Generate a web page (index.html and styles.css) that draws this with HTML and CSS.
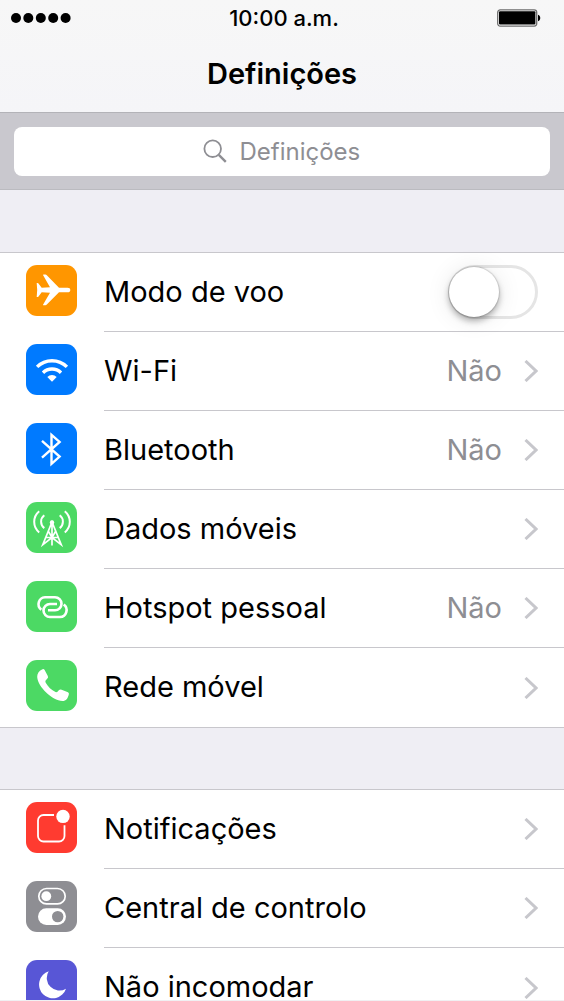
FILE: index.html
```html
<!DOCTYPE html>
<html lang="pt">
<head>
<meta charset="utf-8">
<meta name="viewport" content="width=device-width, initial-scale=1">
<title>Definições</title>
<link rel="stylesheet" href="styles.css">
</head>
<body>
<div class="screen">
  <header class="top">
    <div class="status">
      <svg class="signal" viewBox="0 0 60 10" width="60" height="10" aria-hidden="true"><circle cx="5" cy="5" r="5"/><circle cx="17.3" cy="5" r="5"/><circle cx="29.8" cy="5" r="5"/><circle cx="42.2" cy="5" r="5"/><circle cx="54.6" cy="5" r="5"/></svg>
      <span class="clock">10:00 a.m.</span>
      <svg class="battery" viewBox="0 0 44 18" width="44" height="18" aria-hidden="true"><rect x=".7" y=".9" width="39" height="16.2" rx="2.5" fill="#fff" stroke="#6d6d6d" stroke-width="1.3"/><rect x="2" y="2.2" width="36.4" height="13.2" rx="1" fill="#000"/><path d="M41 5.8c3 .6 3 5.8 0 6.4z"/></svg>
    </div>
    <h1 class="title">Definições</h1>
  </header>
  <div class="searchbar">
    <label class="search">
      <svg viewBox="0 0 24 24" width="24" height="24" fill="none" stroke="#8e8e93" aria-hidden="true"><circle cx="9.7" cy="9.7" r="8.3" stroke-width="1.8"/><path d="M15.8 15.8l7 7" stroke-width="2.4"/></svg>
      <input class="search-input" type="search" placeholder="Definições" aria-label="Definições">
    </label>
  </div>
  <main>
    <ul class="group">
      <li class="row">
        <span class="tile orange"><svg viewBox="0 0 51 51" fill="#fff"><path d="M17 10q0-.5.6-.5h1.8q.8 0 1.4.7L33 22.7h8.5q2.8 0 2.8 2.3t-2.8 2.3H33L20.8 39.6q-.6.7-1.4.7h-1.8q-.6 0-.6-.5L24 27.7l-8.3-.4-3.2 4.200q-.4.500-1 .500h-.8l.5-7-.5-7h.8q.6 0 1 .5l3.200 4.200 8.300-.4z"/></svg></span>
        <label class="line" for="airplane"><span class="name">Modo de voo</span>
          <input class="switch" id="airplane" type="checkbox" role="switch"></label>
      </li>
      <li><a class="row" href="#wifi">
        <span class="tile blue"><svg viewBox="0 0 51 51" fill="none" stroke="#fff" stroke-width="3.4"><path d="M11.1 22.9a21 21 0 0 1 29.8 0M17 28.7a12.8 12.8 0 0 1 18 0"/><path d="M26 37.7L21.3 33a6.7 6.7 0 0 1 9.4 0z" fill="#fff" stroke="none"/></svg></span>
        <span class="line"><span class="name">Wi-Fi</span><span class="value">Não</span><svg class="chevron" viewBox="0 0 14 22"><path d="M1.5 1L12 11 1.5 21"/></svg></span>
      </a></li>
      <li><a class="row" href="#bluetooth">
        <span class="tile blue"><svg viewBox="0 0 51 51" fill="none" stroke="#fff" stroke-width="2.4"><path d="M16 17.8L33.6 33.6l-8.1 7.2V11.8l8.1 7.1L16 34.7"/></svg></span>
        <span class="line"><span class="name">Bluetooth</span><span class="value">Não</span><svg class="chevron" viewBox="0 0 14 22"><path d="M1.5 1L12 11 1.5 21"/></svg></span>
      </a></li>
      <li><a class="row" href="#dados">
        <span class="tile green"><svg viewBox="0 0 51 51" fill="none" stroke="#fff" stroke-width="2"><path d="M13.2 9.2q-5 4.2-5 10.6t5 10.6M18.3 13.3q-3.2 2.5-3.2 6.4t3.2 6.4M38.8 9.2q5 4.2 5 10.6t-5 10.6M33.7 13.3q3.2 2.5 3.2 6.400t-3.200 6.400"/><path d="M26 20l-9.2 22.700L26 35.500l9.200 7.200zM26 20v23.500M19.800 35.500h12.400M22.500 29.500L26 35.500l3.500-6" stroke-width="1.7"/><circle cx="26" cy="20.500" r="2.200" fill="#fff" stroke="none"/></svg></span>
        <span class="line"><span class="name">Dados móveis</span><svg class="chevron" viewBox="0 0 14 22"><path d="M1.5 1L12 11 1.5 21"/></svg></span>
      </a></li>
      <li><a class="row" href="#hotspot">
        <span class="tile green"><svg viewBox="0 0 51 51" fill="none" stroke="#fff" stroke-width="2.6"><path d="M15.3 28.7A6.900 6.900 0 0 1 19 16.300h10a6.500 6.500 0 0 1 0 13h-7M37.700 23.500A6.900 6.900 0 0 1 34 36H24a6.500 6.500 0 0 1 0-13h7"/></svg></span>
        <span class="line"><span class="name">Hotspot pessoal</span><span class="value">Não</span><svg class="chevron" viewBox="0 0 14 22"><path d="M1.5 1L12 11 1.5 21"/></svg></span>
      </a></li>
      <li><a class="row" href="#rede">
        <span class="tile green"><svg viewBox="0 0 51 51" fill="#fff"><path d="M18.500 9.800l3.300 6.200q.8 1.500-.6 2.800l-1.600 1.700q-.5.8 0 2C22 27 25.500 30 29.500 32q1.200.4 2-.3l1.300-1.400q1.200-1.200 2.800-.5l6.400 2.400q1.300.7.8 2.200C42 38 40 41 36.500 41 26 40.500 12 27 11.200 17c-.2-3.500 1.800-6 4.800-7.600q1.700-.8 2.500.4z"/></svg></span>
        <span class="line"><span class="name">Rede móvel</span><svg class="chevron" viewBox="0 0 14 22"><path d="M1.5 1L12 11 1.5 21"/></svg></span>
      </a></li>
    </ul>
    <ul class="group">
      <li><a class="row" href="#notificacoes">
        <span class="tile red"><svg viewBox="0 0 51 51" fill="none" stroke="#fff" stroke-width="1.8"><path d="M28 13H17.500a5.500 5.500 0 0 0-5.500 5.500v15.500a5.500 5.500 0 0 0 5.500 5.500H33a5.500 5.500 0 0 0 5.500-5.500V23.300"/><circle cx="37" cy="14.400" r="6.700" fill="#fff" stroke="none"/></svg></span>
        <span class="line"><span class="name">Notificações</span><svg class="chevron" viewBox="0 0 14 22"><path d="M1.5 1L12 11 1.5 21"/></svg></span>
      </a></li>
      <li><a class="row" href="#controlo">
        <span class="tile gray"><svg viewBox="0 0 51 51"><rect x="12.800" y="7.500" width="26.400" height="15.400" rx="7.700" fill="none" stroke="#fff" stroke-width="1.700"/><circle cx="20.300" cy="15.200" r="4.900" fill="#fff"/><rect x="12" y="27.300" width="28" height="16.600" rx="8.300" fill="#fff"/><circle cx="31.700" cy="35.600" r="5.700" fill="#8e8e93"/></svg></span>
        <span class="line"><span class="name">Central de controlo</span><svg class="chevron" viewBox="0 0 14 22"><path d="M1.5 1L12 11 1.5 21"/></svg></span>
      </a></li>
      <li><a class="row" href="#incomodar">
        <span class="tile purple"><svg viewBox="0 0 51 51" fill="#fff"><path d="M22.700 11.300A13.800 13.800 0 1 0 40 28.700 12.600 12.600 0 0 1 22.700 11.300z"/></svg></span>
        <span class="line"><span class="name">Não incomodar</span><svg class="chevron" viewBox="0 0 14 22"><path d="M1.5 1L12 11 1.5 21"/></svg></span>
      </a></li>
    </ul>
  </main>
</div>
</body>
</html>
```

FILE: styles.css
```css
* {
  box-sizing: border-box;
}

body {
  margin: 0;
  background: #efeef4;
  color: #000;
  font-family: Inter, "Liberation Sans", sans-serif;
}

.screen {
  height: 100vh;
  overflow-y: auto;
  scrollbar-width: none;
  border-bottom: 1px solid #f0f0f2;
}

.top {
  padding: 4px 23px 18px 11px;
  border-bottom: 1px solid #b3b3b8;
  background: linear-gradient(#f7f7f7, #f5f5f8);
}

.status {
  display: grid;
  grid-template-columns: 1fr auto 1fr;
  align-items: center;
  height: 28px;
}

.clock {
  padding-left: 16px;
  font-size: 22px;
  font-weight: 500;
}

.battery {
  justify-self: end;
}

.title {
  margin: 23px 0 0;
  padding: 0 0 1px 12px;
  font-size: 29px;
  font-weight: 600;
  line-height: 38px;
  text-align: center;
}

.searchbar {
  padding: 14px 14px 13px;
  border-bottom: 1px solid #bbbbc0;
  background: #c9c8ce;
}

.search {
  display: flex;
  align-items: center;
  justify-content: center;
  gap: 13px;
  height: 49px;
  padding: 0 2px 1px 0;
  border-radius: 8px;
  background: #fff;
}

.search-input {
  width: 120px;
  padding: 0;
  border: 0;
  outline: 0;
  background: none;
  font: 24px Inter, "Liberation Sans", sans-serif;
  field-sizing: content;
}

.search-input::placeholder {
  color: #8e8e93;
}

.group {
  margin: 61px 0 0;
  padding: 0;
  border: 1px solid #c8c7cc;
  border-width: 1px 0;
  background: #fff;
  list-style: none;
}

main .group:first-child {
  margin-top: 62px;
}

.row {
  display: flex;
  align-items: stretch;
  gap: 27px;
  height: 79px;
  padding-left: 26px;
  color: inherit;
  text-decoration: none;
}

.tile {
  flex: none;
  width: 51px;
  height: 51px;
  margin-top: 12px;
  border-radius: 11px;
}

.tile svg {
  display: block;
}

.orange { background: #ff9600; }
.blue { background: #007aff; }
.green { background: #4cd964; }
.red { background: #ff3b30; }
.gray { background: #8e8e93; }
.purple { background: #5856d6; }

.line {
  display: flex;
  flex: 1;
  align-items: center;
  padding-right: 26px;
  border-bottom: 1px solid #c8c7cc;
}

.group > li:last-child .line {
  border-bottom: 0;
}

.name {
  flex: 1;
  padding-bottom: 2px;
  font-size: 29px;
}

.value {
  margin-right: 22px;
  padding-bottom: 2px;
  color: #8e8e93;
  font-size: 29px;
}

.chevron {
  width: 14px;
  height: 22px;
  fill: none;
  stroke: #c7c7cc;
  stroke-width: 3;
}

.switch {
  appearance: none;
  width: 90px;
  height: 54px;
  margin: 0;
  border: 3px solid #e5e5e5;
  border-radius: 27px;
  background: #fff;
}

.switch::before {
  display: block;
  width: 50px;
  height: 50px;
  margin: -1px 0 0 -2px;
  border-radius: 50%;
  background: #fff;
  box-shadow: 0 0 1px 1px rgba(0, 0, 0, 0.12), 0 4px 6px rgba(0, 0, 0, 0.3), 0 2px 24px rgba(0, 0, 0, 0.1);
  content: "";
}

.switch:checked {
  border-color: #4cd964;
  background: #4cd964;
}

.switch:checked::before {
  margin-left: 36px;
}
```
